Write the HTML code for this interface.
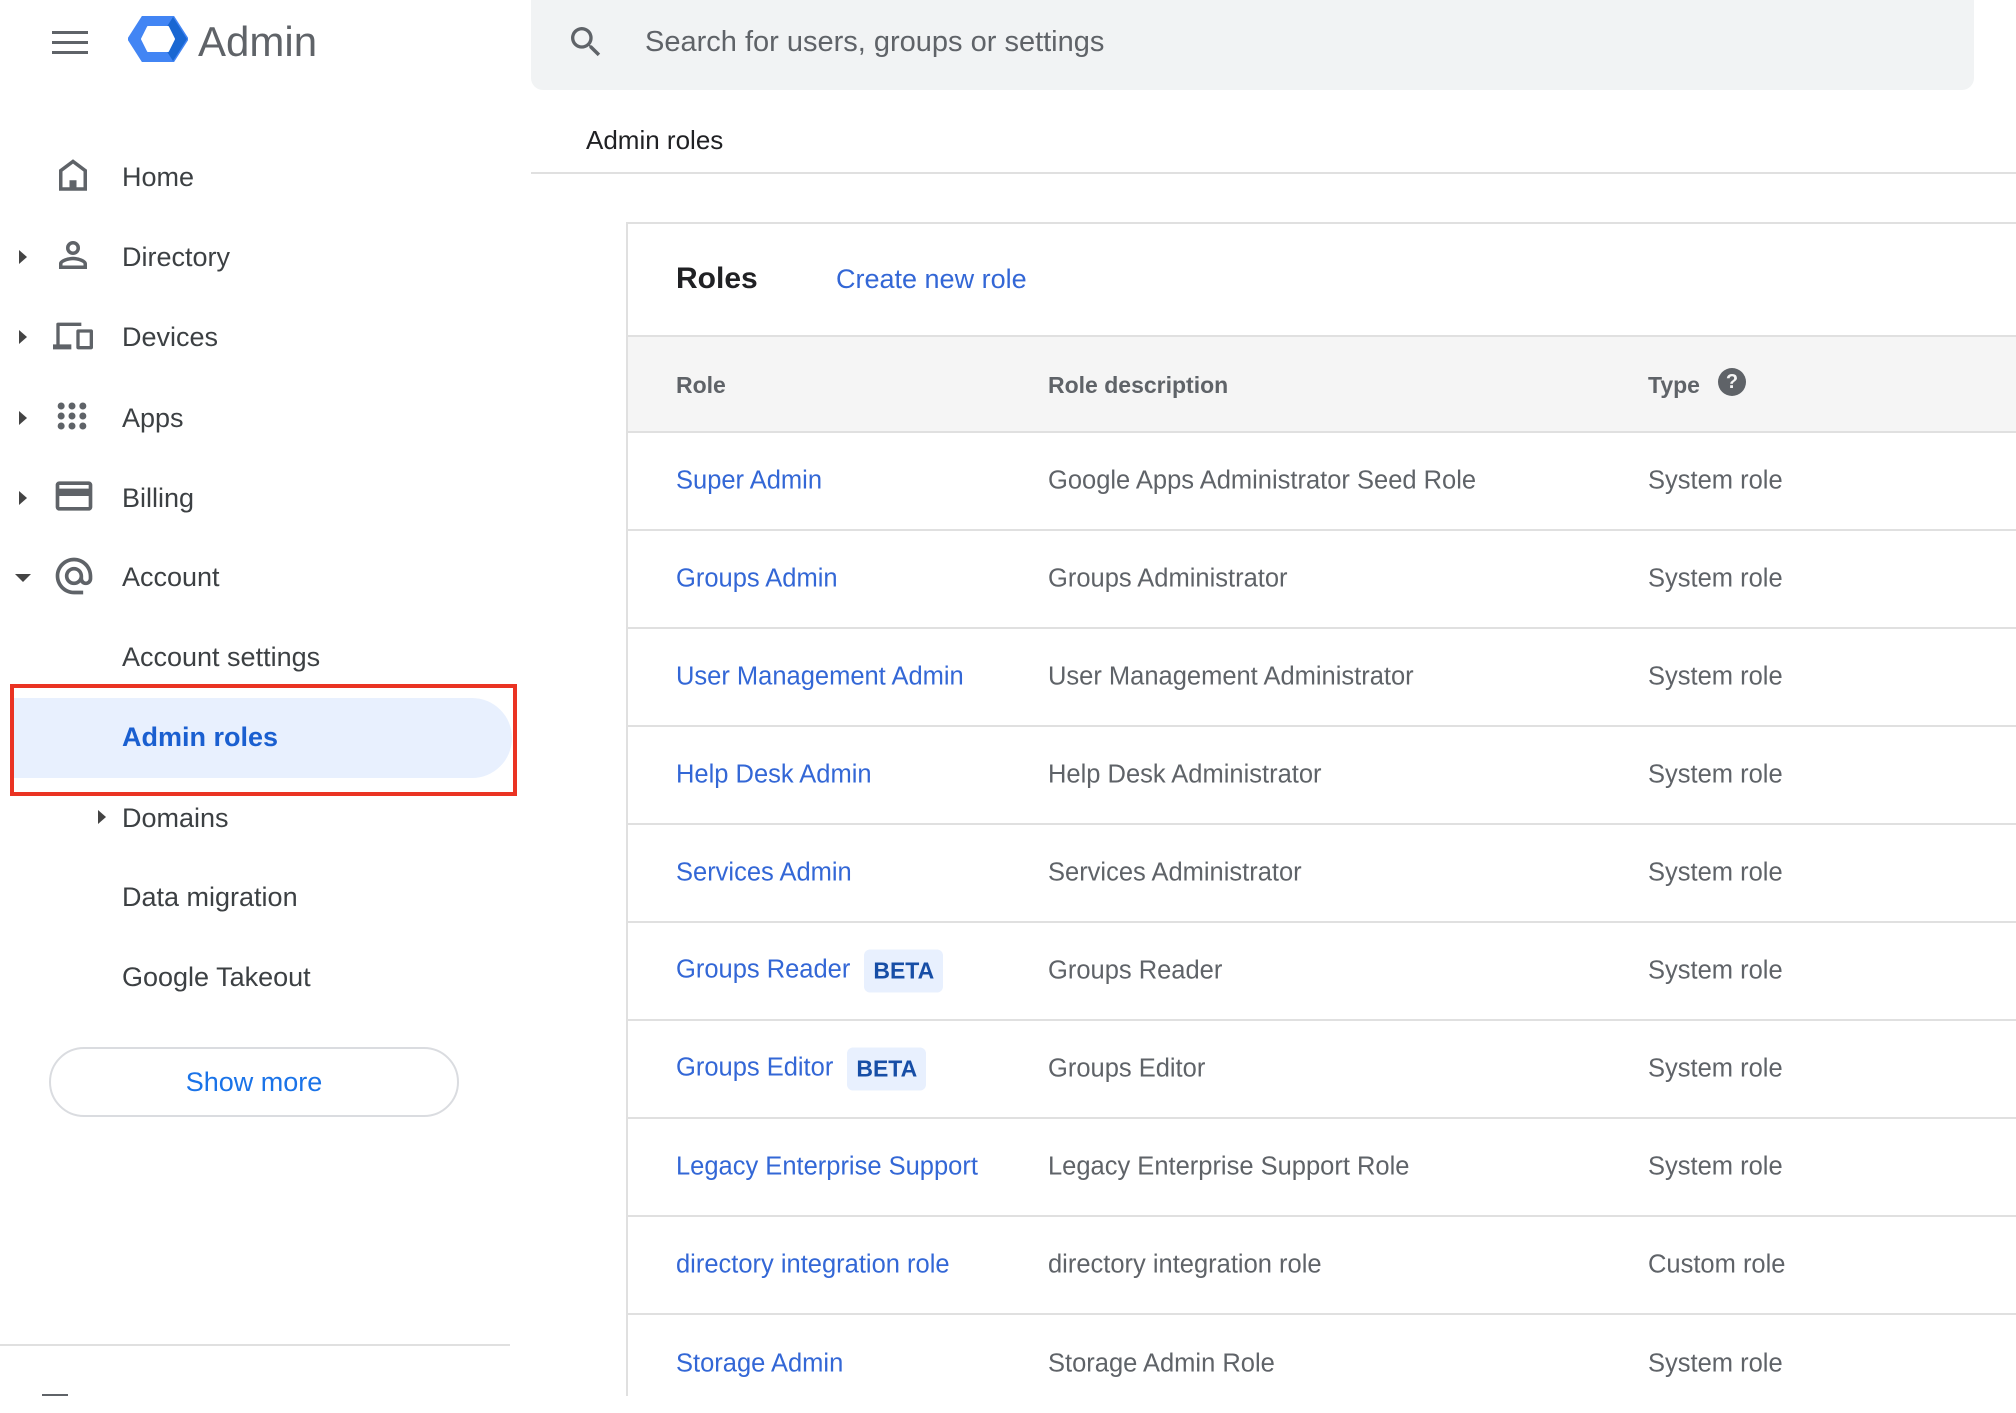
<!DOCTYPE html>
<html><head><style>
*{margin:0;padding:0;box-sizing:border-box}
body{width:2016px;height:1396px;overflow:hidden;background:#fff;font-family:"Liberation Sans",Arial,sans-serif;position:relative;color:#202124}
.abs{position:absolute}
.nav{position:absolute;left:122px;font-size:27px;color:#3c4043;line-height:1}
.ic{position:absolute;left:52px}
.arr{position:absolute;left:19px;width:0;height:0;border-top:7px solid transparent;border-bottom:7px solid transparent;border-left:8px solid #444}
.row{position:absolute;left:627px;right:0;height:98px;border-bottom:2px solid #e0e0e0;font-size:25.5px}
.row span{position:absolute;top:50%;transform:translateY(-50%);white-space:nowrap}
.c1{left:49px;color:#3367d6}.c2{left:421px;color:#5f6368}.c3{left:1021px;color:#5f6368}
.beta{display:inline-block;background:#e8f0fe;color:#174ea6;font-weight:bold;font-size:23px;padding:8px 9px;border-radius:6px;margin-left:14px;vertical-align:middle}
</style></head><body>
<div class="abs" style="left:52px;top:31px;width:36px;height:3px;background:#5f6368"></div>
<div class="abs" style="left:52px;top:41px;width:36px;height:3px;background:#5f6368"></div>
<div class="abs" style="left:52px;top:51px;width:36px;height:3px;background:#5f6368"></div>
<svg class="abs" style="left:128px;top:16px" width="60" height="46" viewBox="0 0 60 46"><polygon points="15,1 45,1 59,23 45,45 15,45 1,23" fill="#4285f4" stroke="#4285f4" stroke-width="3" stroke-linejoin="round"/><polygon points="45,1 59,23 45,45 38,34 44,23 38,12" fill="#1967d2"/><polygon points="20,11 40,11 46,23 40,35 20,35 14,23" fill="#fff" stroke="#fff" stroke-width="2" stroke-linejoin="round"/></svg>
<div class="abs" style="left:198px;top:18px;font-size:42px;color:#5f6368">Admin</div>
<div class="abs" style="left:531px;top:0;width:1443px;height:90px;background:#f1f3f4;border-radius:0 0 12px 12px"></div>
<svg class="abs" style="left:566px;top:22px" width="40" height="40" viewBox="0 0 24 24"><path fill="#5f6368" d="M15.5 14h-.79l-.28-.27A6.47 6.47 0 0 0 16 9.5 6.5 6.5 0 1 0 9.5 16c1.61 0 3.09-.59 4.23-1.57l.27.28v.79l5 4.99L20.49 19l-4.99-5zm-6 0C7.01 14 5 11.99 5 9.5S7.01 5 9.5 5 14 7.01 14 9.5 11.99 14 9.5 14z"/></svg>
<div class="abs" style="left:645px;top:26px;font-size:29px;color:#5f6368">Search for users, groups or settings</div>
<div class="abs" style="left:586px;top:125px;font-size:26px;color:#202124">Admin roles</div>
<div class="abs" style="left:531px;top:172px;right:0;height:2px;background:#e0e0e0"></div>
<svg class="ic" style="top:154px" width="42" height="42" viewBox="0 0 24 24"><path fill="#5f6368" d="M12 3 4 9v12h16V9l-8-6zm6 16h-4v-4h-4v4H6v-9l6-4.5 6 4.5v9z"/></svg>
<div class="nav" style="top:164px">Home</div>
<div class="arr" style="top:250px"></div>
<svg class="ic" style="top:234px" width="42" height="42" viewBox="0 0 24 24"><path fill="#5f6368" d="M12 6a2 2 0 1 1 0 4 2 2 0 0 1 0-4m0 9c2.7 0 5.8 1.29 6 2v1H6v-.99c.2-.72 3.3-2.01 6-2.01M12 4a4 4 0 1 0 0 8 4 4 0 0 0 0-8zm0 9c-2.670 0-8 1.34-8 4v3h16v-3c0-2.66-5.33-4-8-4z"/></svg>
<div class="nav" style="top:244px">Directory</div>
<div class="arr" style="top:330px"></div>
<svg class="ic" style="top:316px" width="42" height="40" viewBox="0 0 24 24"><path fill="#5f6368" d="M3 6h14V4H3c-1.1 0-1 1-1 1v12H0v3h11v-3H4V6zm20 2h-8c-.55 0-1 .45-1 1v10c0 .55.45 1 1 1h8c.55 0 1-.45 1-1V9c0-.55-.45-1-1-1zm-1 10h-6v-8h6v8z"/></svg>
<div class="nav" style="top:324px">Devices</div>
<div class="arr" style="top:411px"></div>
<svg class="ic" style="top:396px" width="40" height="40" viewBox="0 0 24 24"><g fill="#5f6368"><circle cx="5.5" cy="6" r="2.1"/><circle cx="12" cy="6" r="2.1"/><circle cx="18.5" cy="6" r="2.1"/><circle cx="5.5" cy="12" r="2.1"/><circle cx="12" cy="12" r="2.1"/><circle cx="18.5" cy="12" r="2.1"/><circle cx="5.5" cy="18" r="2.1"/><circle cx="12" cy="18" r="2.1"/><circle cx="18.5" cy="18" r="2.1"/></g></svg>
<div class="nav" style="top:405px">Apps</div>
<div class="arr" style="top:491px"></div>
<svg class="ic" style="top:474px" width="44" height="44" viewBox="0 0 24 24"><path fill="#5f6368" d="M20 4H4c-1.11 0-2 .89-2 2v12c0 1.11.89 2 2 2h16c1.11 0 2-.89 2-2V6c0-1.110-.89-2-2-2zm0 14H4v-6h16v6zm0-10H4V6h16v2z"/></svg>
<div class="nav" style="top:485px">Billing</div>
<div class="abs" style="left:15px;top:574px;border-left:8px solid transparent;border-right:8px solid transparent;border-top:8px solid #444"></div>
<svg class="ic" style="top:554px" width="44" height="44" viewBox="0 0 24 24"><path fill="#5f6368" d="M12 2C6.48 2 2 6.48 2 12s4.48 10 10 10h5v-2h-5c-4.34 0-8-3.66-8-8s3.66-8 8-8 8 3.66 8 8v1.43c0 .79-.71 1.57-1.5 1.57s-1.5-.78-1.5-1.57V12c0-2.76-2.24-5-5-5s-5 2.24-5 5 2.24 5 5 5c1.38 0 2.64-.56 3.54-1.47.65.89 1.77 1.47 2.96 1.47 1.97 0 3.5-1.6 3.5-3.57V12c0-5.520-4.48-10-10-10zm0 13c-1.66 0-3-1.34-3-3s1.34-3 3-3 3 1.34 3 3-1.34 3-3 3z"/></svg>
<div class="nav" style="top:564px">Account</div>
<div class="nav" style="top:644px">Account settings</div>
<div class="abs" style="left:13px;top:698px;width:499px;height:80px;background:#e8f0fe;border-radius:0 40px 40px 0"></div>
<div class="abs" style="left:10px;top:684px;width:507px;height:112px;border:4px solid #ea3323"></div>
<div class="nav" style="top:724px;color:#1a5fd0;font-weight:bold;font-size:27px">Admin roles</div>
<div class="abs" style="left:98px;top:810px;border-top:7px solid transparent;border-bottom:7px solid transparent;border-left:8px solid #444"></div>
<div class="nav" style="top:805px">Domains</div>
<div class="nav" style="top:884px">Data migration</div>
<div class="nav" style="top:964px">Google Takeout</div>
<div class="abs" style="left:49px;top:1047px;width:410px;height:70px;border:2px solid #dadce0;border-radius:35px;text-align:center;line-height:66px;font-size:27px;color:#1a73e8">Show more</div>
<div class="abs" style="left:0;top:1344px;width:510px;height:2px;background:#e0e0e0"></div>
<div class="abs" style="left:42px;top:1394px;width:26px;height:2px;background:#5f6368"></div>
<div class="abs" style="left:626px;top:222px;right:0;bottom:0;border-left:2px solid #e0e0e0;border-top:2px solid #e0e0e0"></div>
<div class="abs" style="left:676px;top:262px;font-size:30px;font-weight:bold;color:#202124">Roles</div>
<div class="abs" style="left:836px;top:264px;font-size:27px;color:#3367d6">Create new role</div>
<div class="abs" style="left:628px;top:335px;right:0;height:98px;background:#f5f5f5;border-top:2px solid #e0e0e0;border-bottom:2px solid #e0e0e0;font-size:23px;font-weight:bold;color:#5f6368">
<span class="abs" style="left:48px;top:35px">Role</span>
<span class="abs" style="left:420px;top:35px">Role description</span>
<span class="abs" style="left:1020px;top:35px">Type</span>
<span class="abs" style="left:1090px;top:31px;width:28px;height:28px;border-radius:50%;background:#5f6368;color:#f5f5f5;font-size:20px;text-align:center;line-height:28px">?</span>
</div>
<div class="row" style="top:433px"><span class="c1">Super Admin</span><span class="c2">Google Apps Administrator Seed Role</span><span class="c3">System role</span></div>
<div class="row" style="top:531px"><span class="c1">Groups Admin</span><span class="c2">Groups Administrator</span><span class="c3">System role</span></div>
<div class="row" style="top:629px"><span class="c1">User Management Admin</span><span class="c2">User Management Administrator</span><span class="c3">System role</span></div>
<div class="row" style="top:727px"><span class="c1">Help Desk Admin</span><span class="c2">Help Desk Administrator</span><span class="c3">System role</span></div>
<div class="row" style="top:825px"><span class="c1">Services Admin</span><span class="c2">Services Administrator</span><span class="c3">System role</span></div>
<div class="row" style="top:923px"><span class="c1">Groups Reader<b class="beta">BETA</b></span><span class="c2">Groups Reader</span><span class="c3">System role</span></div>
<div class="row" style="top:1021px"><span class="c1">Groups Editor<b class="beta">BETA</b></span><span class="c2">Groups Editor</span><span class="c3">System role</span></div>
<div class="row" style="top:1119px"><span class="c1">Legacy Enterprise Support</span><span class="c2">Legacy Enterprise Support Role</span><span class="c3">System role</span></div>
<div class="row" style="top:1217px"><span class="c1">directory integration role</span><span class="c2">directory integration role</span><span class="c3">Custom role</span></div>
<div class="row" style="top:1315px;border-bottom:none"><span class="c1">Storage Admin</span><span class="c2">Storage Admin Role</span><span class="c3">System role</span></div>
</body></html>
